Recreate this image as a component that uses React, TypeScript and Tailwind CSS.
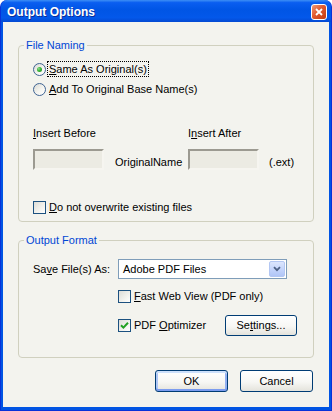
import React from "react";

function Radio({ checked }: { checked?: boolean }) {
  return (
    <span className="w-[13px] h-[13px] shrink-0 rounded-full border border-[#3f6493] bg-[linear-gradient(135deg,#d9d9d3_0%,#f4f4f0_55%,#ffffff_100%)] flex items-center justify-center">
      {checked && (
        <span className="w-[5px] h-[5px] rounded-full bg-[radial-gradient(circle_at_35%_35%,#8fe08f_0%,#36b336_45%,#1f8f1f_100%)]" />
      )}
    </span>
  );
}

function Check({ checked }: { checked?: boolean }) {
  return (
    <span className="w-[13px] h-[13px] shrink-0 border border-[#1c5180] bg-[linear-gradient(135deg,#dcdcd7_0%,#f2f2ee_60%,#ffffff_100%)] flex items-center justify-center">
      {checked && (
        <svg width="9" height="9" viewBox="0 0 9 9">
          <path d="M1 4.2 L3.4 6.6 L8 1.8" fill="none" stroke="#21a121" strokeWidth="2" />
        </svg>
      )}
    </span>
  );
}

function U({ children }: { children: React.ReactNode }) {
  return <span className="underline underline-offset-[1px]">{children}</span>;
}

function Btn({ children, primary, w }: { children: React.ReactNode; primary?: boolean; w: string }) {
  return (
    <div
      className={`${w} h-[22px] rounded-[3px] border border-[#003c74] bg-[linear-gradient(180deg,#ffffff_0%,#f7f7f4_55%,#e4e3dc_100%)] flex items-center justify-center ${
        primary ? "shadow-[inset_0_2px_0_#cde0fb,inset_0_-2px_0_#7b9cef,inset_2px_0_0_#aec6f5,inset_-2px_0_0_#92b0f1]" : ""
      }`}
    >
      {children}
    </div>
  );
}

function TextBox() {
  return (
    <div className="w-[71px] h-[21px] shrink-0 bg-[#ecebe3] border-2 border-t-[#9c9a91] border-l-[#9c9a91] border-r-[#f6f5f0] border-b-[#f6f5f0]" />
  );
}

export default function App() {
  return (
    <div className="w-[332px] h-[411px] flex flex-col rounded-t-[7px] bg-[#0054e3] border-x border-b border-[#0831d9] font-['Liberation_Sans',Arial,sans-serif] text-[11px] leading-[13px] text-black">
      {/* title bar */}
      <div className="h-[22px] shrink-0 flex items-center justify-between pl-[6px] pr-[4px] pt-[2px] rounded-t-[7px] bg-[linear-gradient(180deg,#3d8ff5_0%,#0a5ef0_12%,#0055e5_45%,#0358ea_80%,#0449d2_100%)]">
        <span className="text-white font-bold text-[12px] [text-shadow:1px_1px_#0c2e9a]">Output Options</span>
        <span className="w-[16px] h-[16px] rounded-[3px] border border-white bg-[linear-gradient(135deg,#ef9a78_0%,#e15a2f_45%,#c23a10_100%)] flex items-center justify-center">
          <svg width="8" height="8" viewBox="0 0 8 8">
            <path d="M1 1 L7 7 M7 1 L1 7" stroke="#fff" strokeWidth="1.8" />
          </svg>
        </span>
      </div>

      {/* client */}
      <div className="flex-1 mx-[2px] mb-[3px] bg-[#f3f3ee] px-[15px] flex flex-col">
        <fieldset className="mt-[16px] border border-[#d0d0bf] rounded-[4px] p-0">
          <legend className="ml-[5px] px-[2px] leading-[14px] text-[#0046d5]">File Naming</legend>
          <div className="pl-[14px] pb-[6px] flex flex-col">
            <div className="mt-[8px] h-[18px] flex items-center gap-[1px]">
              <Radio checked />
              <span className="border border-dotted border-black px-[1px] h-[16px] flex items-center">
                <U>S</U>ame As Original(s)
              </span>
            </div>
            <div className="mt-[2px] h-[18px] flex items-center gap-[2px]">
              <Radio />
              <span className="px-[1px]">
                <U>A</U>dd To Original Base Name(s)
              </span>
            </div>
            <div className="mt-[28px] h-[14px] flex items-center">
              <span className="w-[155px]">
                <U>I</U>nsert Before
              </span>
              <span>
                I<U>n</U>sert After
              </span>
            </div>
            <div className="mt-[9px] h-[21px] flex items-end">
              <TextBox />
              <span className="ml-[11px] w-[73px] mb-[1px]">OriginalName</span>
              <TextBox />
              <span className="ml-[10px] mb-[1px]">(.ext)</span>
            </div>
            <div className="mt-[29px] h-[16px] flex items-center gap-[3px]">
              <Check />
              <span>
                <U>D</U>o not overwrite existing files
              </span>
            </div>
          </div>
        </fieldset>

        <fieldset className="mt-[11px] border border-[#d0d0bf] rounded-[4px] p-0">
          <legend className="ml-[5px] px-[2px] leading-[14px] text-[#0046d5]">Output Format</legend>
          <div className="pl-[14px] pb-[21px] flex flex-col">
            <div className="mt-[12px] h-[20px] flex items-center">
              <span className="w-[85px]">
                Sa<U>v</U>e File(s) As:
              </span>
              <div className="w-[169px] h-[20px] border border-[#7f9db9] bg-white flex items-center justify-between pl-[4px]">
                <span>Adobe PDF Files</span>
                <span className="w-[16px] h-[16px] mr-[1px] rounded-[2px] border border-[#b3c7f3] bg-[linear-gradient(180deg,#dce6fd_0%,#c1d2fb_60%,#b0c5f6_100%)] flex items-center justify-center">
                  <svg width="8" height="6" viewBox="0 0 8 6">
                    <path d="M1 1.2 L4 4.2 L7 1.2" fill="none" stroke="#4d6185" strokeWidth="1.8" />
                  </svg>
                </span>
              </div>
            </div>
            <div className="mt-[9px] h-[16px] flex items-center gap-[3px] pl-[85px]">
              <Check />
              <span>
                <U>F</U>ast Web View (PDF only)
              </span>
            </div>
            <div className="mt-[11px] h-[21px] flex items-center pl-[85px]">
              <div className="w-[107px] flex items-center gap-[3px]">
                <Check checked />
                <span>
                  PDF <U>O</U>ptimizer
                </span>
              </div>
              <div className="w-[72px] h-[21px] rounded-[3px] border border-[#003c74] bg-[linear-gradient(180deg,#ffffff_0%,#f7f7f4_55%,#e4e3dc_100%)] flex items-center justify-center">
                <span>
                  Se<U>t</U>tings...
                </span>
              </div>
            </div>
          </div>
        </fieldset>

        <div className="mt-[12px] flex justify-end gap-[12px] mr-[1px]">
          <Btn primary w="w-[73px]">OK</Btn>
          <Btn w="w-[73px]">Cancel</Btn>
        </div>
      </div>
    </div>
  );
}
